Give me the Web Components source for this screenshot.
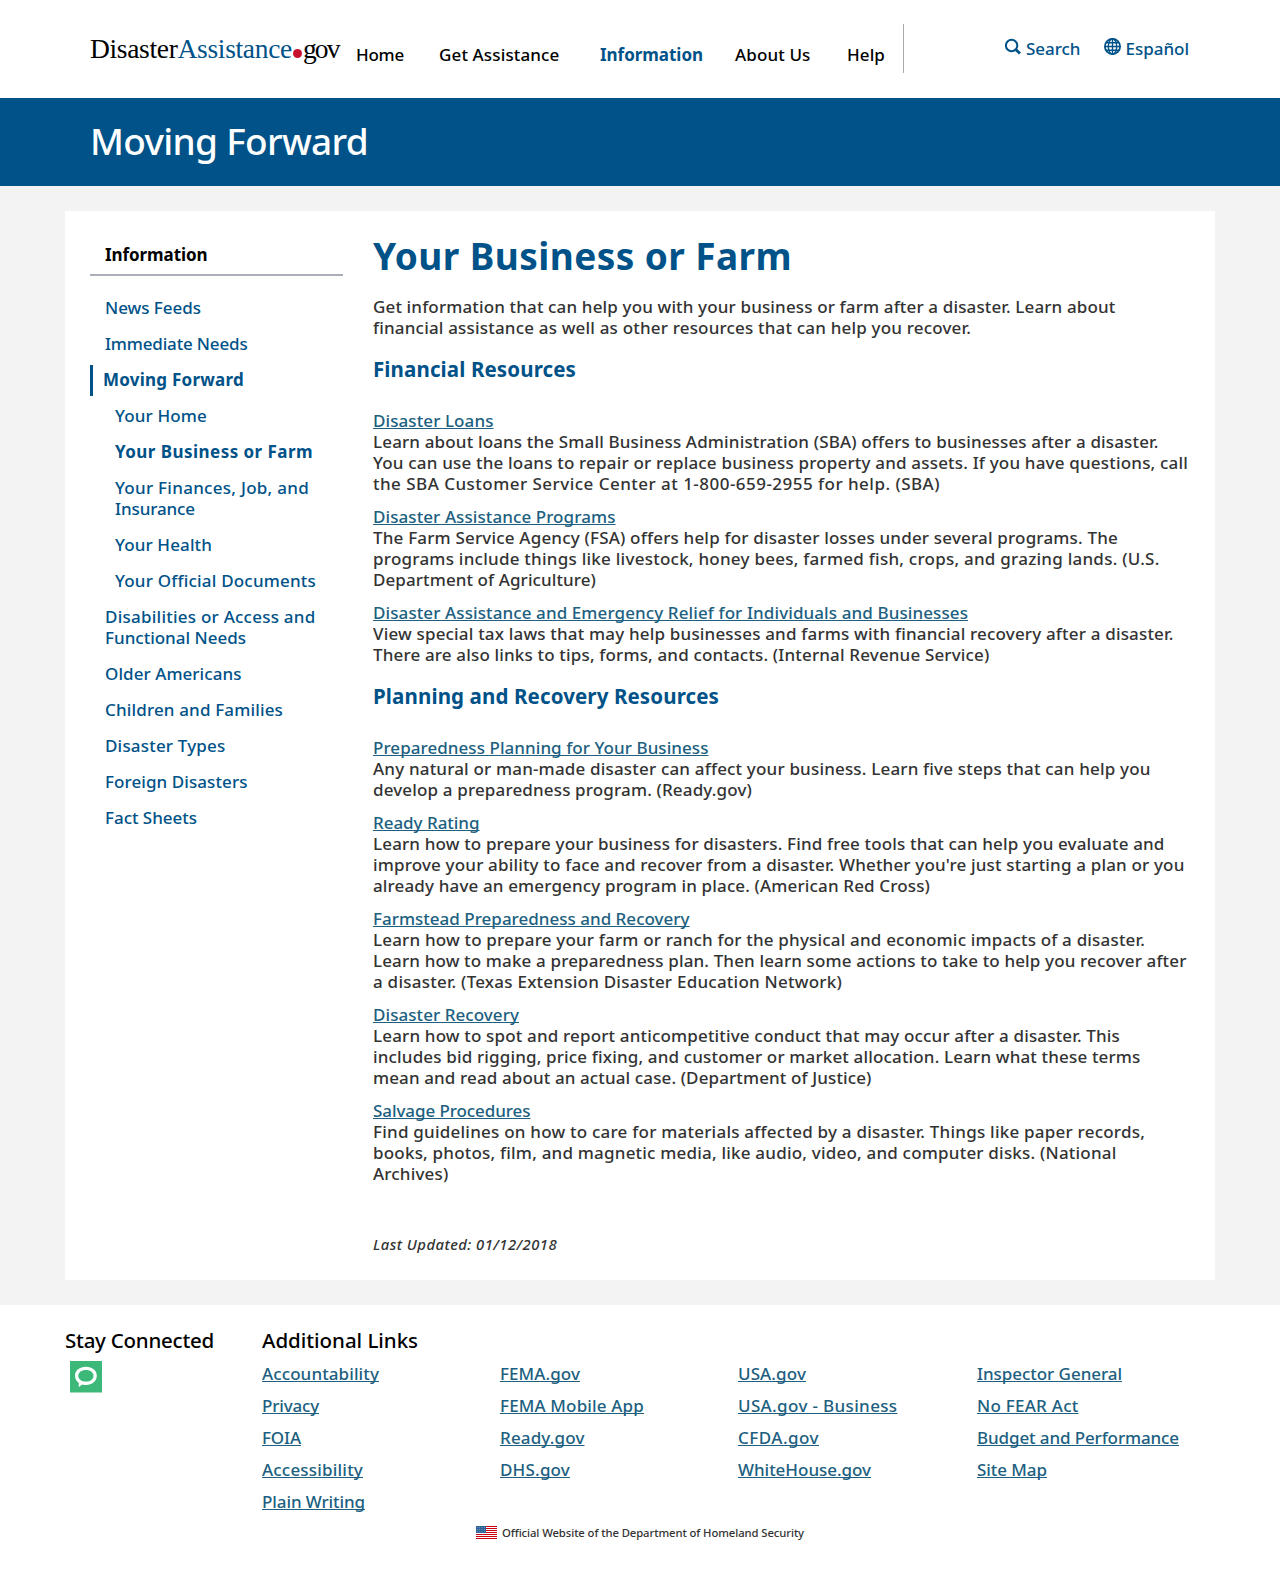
<!DOCTYPE html>
<html lang="en">
<head>
<meta charset="utf-8">
<title>Your Business or Farm | DisasterAssistance.gov</title>
<style>
html,body{margin:0;background:#fff}
body{font:500 17px/21px "Noto Sans","Open Sans",sans-serif;color:#333}
</style>
</head>
<body>
<da-page></da-page>
<script>
const define = (name, css, html, after) => {
  const t = document.createElement('template');
  t.innerHTML = `<style>*{box-sizing:border-box}${css}</style>${html}`;
  customElements.define(name, class extends HTMLElement {
    connectedCallback() {
      if (this.shadowRoot) return;
      this.attachShadow({mode: 'open'}).append(t.content.cloneNode(true));
      if (after) after(this, this.shadowRoot);
    }
  });
};

/* One line of text, tracked so that it fills the measure given in "w". */
define('fit-line', `:host{display:block;white-space:nowrap}
  span{display:inline-block;vertical-align:top;text-decoration:inherit;text-underline-offset:1px;text-decoration-thickness:1px;text-decoration-skip-ink:none}
  :host([link]) span{text-decoration:underline;text-decoration-thickness:1px;color:#205f80}`,
  `<span></span>`, (el, root) => {
    const s = root.querySelector('span');
    s.textContent = el.getAttribute('text');
    const w = parseFloat(el.getAttribute('w'));
    s.style.letterSpacing = (w - s.getBoundingClientRect().width) / s.textContent.length + 'px';
  });
const line = (text, w, extra = '') => `<fit-line text="${text}" w="${w}" ${extra}></fit-line>`;

define('da-logo', `:host{display:flex;width:252px;height:40px;font:400 27.5px/40px "Liberation Serif",serif;color:#000}
  .b{color:#005288} i{width:9px;height:9px;border-radius:50%;background:#c8102e;margin:20px 1px 0 1px}`,
  `${line('Disaster', 87.5)}<div class="b">${line('Assistance', 114.5)}</div><i></i>${line('gov', 35.5)}`);

define('da-header', `:host{display:flex;height:98px;padding-left:90px;background:#fff;color:#000}
  da-logo{margin-top:29px}
  nav{display:flex;margin-top:44px}
  nav fit-line{flex:none}
  .on{font-weight:700;color:#005288}
  hr{width:1px;height:49px;margin:24px 0 0 18px;border:0;background:#aaa}
  .tools{display:flex;margin:38px 0 0 101px;color:#005288}
  svg{flex:none;display:block}`,
  `<da-logo></da-logo>
  <nav>${line('Home', 48, 'style="margin-left:14px"')}${line('Get Assistance', 120.5, 'style="margin-left:35px"')}
  ${line('Information', 103, 'class="on" style="margin-left:40.5px"')}${line('About Us', 75.5, 'style="margin-left:32px"')}${line('Help', 38, 'style="margin-left:36.5px"')}</nav>
  <hr>
  <div class="tools">
   <svg width="16" height="17" viewBox="0 0 16 17" fill="none" stroke="#005288"><circle cx="6.6" cy="7.5" r="5.7" stroke-width="2"/><path d="M10.8 11.6 15 15.600" stroke-width="2.8"/></svg>
   ${line('Search', 54.5, 'style="margin-left:5px"')}
   <svg style="margin-left:23px" width="17" height="17" viewBox="0 0 17 17" fill="none" stroke="#005288" stroke-width="1.4"><circle cx="8.5" cy="8.5" r="7.6" stroke-width="1.800"/><ellipse cx="8.5" cy="8.5" rx="4.2" ry="7.7"/><path d="M8.5 1v15M1 8.500h15M2.2 4.8h12.6M2.2 12.2h12.6"/></svg>
   ${line('Español', 63.5, 'style="margin-left:5px"')}
  </div>`);

define('da-banner', `:host{display:block;height:88px;padding:17px 0 0 90px;background:#005288;color:#fff;font-size:37px;line-height:52px;font-weight:500}`,
  line('Moving Forward', 278));

const items = [
  [['News Feeds', 96]], [['Immediate Needs', 142.5]], 'here',
  'sub', [['Your Home', 92]], 'cur', [['Your Finances, Job, and', 194], ['Insurance', 80]], [['Your Health', 97]], [['Your Official Documents', 201]], 'end',
  [['Disabilities or Access and', 210.5], ['Functional Needs', 141]], [['Older Americans', 136.5]], [['Children and Families', 178]], [['Disaster Types', 120.5]], [['Foreign Disasters', 142.5]], [['Fact Sheets', 92]]
];
define('da-sidebar', `:host{display:block;width:253px;color:#005288}
  h2{margin:0 0 21px;padding:0 0 9px 15px;border-bottom:2px solid #a9aeb9;font:700 17px/21px "Noto Sans",sans-serif;color:#000}
  ul{list-style:none;margin:0;padding:0 0 0 15px;display:flex;flex-direction:column;gap:15px}
  ul ul{padding-left:10px}
  .here{margin:-4px 0 -6px -15px;padding:4px 0 6px 10px;border-left:3px solid #005288;font-weight:700}
  .cur{font-weight:700}`,
  `<h2>${line('Information', 102.5)}</h2><ul>` + items.map(i =>
    i === 'here' ? `<li class="here">${line('Moving Forward', 141)}</li>` :
    i === 'sub' ? '<li><ul>' : i === 'end' ? '</ul></li>' :
    i === 'cur' ? `<li class="cur">${line('Your Business or Farm', 198)}</li>` :
    `<li>${i.map(l => line(...l)).join('')}</li>`).join('') + '</ul>');

const res = (title, ...lines) => `<article>${line(...title, 'link')}${lines.map(l => line(...l)).join('')}</article>`;
define('da-article', `:host{display:block;width:820px}
  h1,h2{margin:0;color:#005288}
  h1{font:700 37px/50px "Noto Sans",sans-serif}
  h2{font:700 20.5px/25px "Noto Sans",sans-serif;margin:19px 0 28px}
  article+article{margin-top:12px}
  .intro{margin-top:15px}
  .date{margin-top:50px;font-size:14.8px;font-style:italic}`,
  `<h1>${line('Your Business or Farm', 419)}</h1>
  <div class="intro">${line('Get information that can help you with your business or farm after a disaster. Learn about', 742.5)}${line('financial assistance as well as other resources that can help you recover.', 598)}</div>
  <h2>${line('Financial Resources', 203)}</h2>
  ${res(['Disaster Loans', 120.5], ['Learn about loans the Small Business Administration (SBA) offers to businesses after a disaster.', 785.5], ['You can use the loans to repair or replace business property and assets. If you have questions, call', 815], ['the SBA Customer Service Center at 1-800-659-2955 for help. (SBA)', 567])}
  ${res(['Disaster Assistance Programs', 242.5], ['The Farm Service Agency (FSA) offers help for disaster losses under several programs. The', 745], ['programs include things like livestock, honey bees, farmed fish, crops, and grazing lands. (U.S.', 786.5], ['Department of Agriculture)', 223])}
  ${res(['Disaster Assistance and Emergency Relief for Individuals and Businesses', 595], ['View special tax laws that may help businesses and farms with financial recovery after a disaster.', 800.5], ['There are also links to tips, forms, and contacts. (Internal Revenue Service)', 616.5])}
  <h2>${line('Planning and Recovery Resources', 346)}</h2>
  ${res(['Preparedness Planning for Your Business', 335.5], ['Any natural or man-made disaster can affect your business. Learn five steps that can help you', 777.5], ['develop a preparedness program. (Ready.gov)', 379])}
  ${res(['Ready Rating', 106.5], ['Learn how to prepare your business for disasters. Find free tools that can help you evaluate and', 791.5], ["improve your ability to face and recover from a disaster. Whether you're just starting a plan or you", 811.5], ['already have an emergency program in place. (American Red Cross)', 557])}
  ${res(['Farmstead Preparedness and Recovery', 316.5], ['Learn how to prepare your farm or ranch for the physical and economic impacts of a disaster.', 772], ['Learn how to make a preparedness plan. Then learn some actions to take to help you recover after', 813.5], ['a disaster. (Texas Extension Disaster Education Network)', 469])}
  ${res(['Disaster Recovery', 146], ['Learn how to spot and report anticompetitive conduct that may occur after a disaster. This', 747], ['includes bid rigging, price fixing, and customer or market allocation. Learn what these terms', 767.5], ['mean and read about an actual case. (Department of Justice)', 498.5])}
  ${res(['Salvage Procedures', 157.5], ['Find guidelines on how to care for materials affected by a disaster. Things like paper records,', 772], ['books, photos, film, and magnetic media, like audio, video, and computer disks. (National', 743.5], ['Archives)', 75.5])}
  <div class="date">${line('Last Updated: 01/12/2018', 184)}</div>`);

const cols = [
  [['Accountability', 117], ['Privacy', 57], ['FOIA', 39], ['Accessibility', 101], ['Plain Writing', 103]],
  [['FEMA.gov', 80], ['FEMA Mobile App', 144], ['Ready.gov', 84.5], ['DHS.gov', 70]],
  [['USA.gov', 68], ['USA.gov - Business', 159.5], ['CFDA.gov', 81], ['WhiteHouse.gov', 133]],
  [['Inspector General', 145], ['No FEAR Act', 101.5], ['Budget and Performance', 202], ['Site Map', 70]]
];
const stripes = Array.from({length: 7}, (_, i) => `<path d="M0 ${i * 2 + .5}h21" stroke="#c8000f"/>`).join('');
const stars = Array.from({length: 12}, (_, i) => `<circle cx="${1.4 + i % 4 * 2.3}" cy="${1.4 + (i >> 2) * 2.1}" r=".45" fill="#a7c3dc"/>`).join('');
define('da-footer', `:host{display:block;background:#fff;padding:22px 65px 0}
  .row{display:flex}
  .stay{width:197px}
  h3{margin:0;font:500 20.5px/26px "Noto Sans",sans-serif;color:#000}
  .stay svg{display:block;margin:8px 0 0 5px}
  .cols{display:flex;margin-top:10px}
  .cols div{width:238px;display:flex;flex-direction:column;gap:11px}
  .cols div:nth-child(3){width:239px}
  .official{display:flex;justify-content:center;margin-top:14px;font-size:11.3px;line-height:14px;gap:5px}`,
  `<div class="row"><section class="stay"><h3>${line('Stay Connected', 149)}</h3>
   <svg width="32" height="32" viewBox="0 0 32 32"><path fill="#3cb878" d="M0 0h32v31.5H0z"/><path fill="#fff" fill-rule="evenodd" d="M16 5.800c6.200 0 10.800 3.700 10.800 9S22.200 24 16 24c-1.500 0-2.600-.1-3.700-.5L8.700 26l.1-4C6.400 20.200 5 17.800 5 14.800 5 9.500 9.700 5.800 16 5.800zm0 3.200c-4.400 0-7.700 2.300-7.700 5.800s3.300 5.800 7.700 5.800 7.500-2.300 7.500-5.800S20.400 9 16 9z"/></svg></section>
  <section><h3>${line('Additional Links', 156)}</h3><div class="cols">${cols.map(c => `<div>${c.map(l => line(...l, 'link')).join('')}</div>`).join('')}</div></section></div>
  <div class="official"><svg width="21" height="13" viewBox="0 0 21 13"><path fill="#fff" d="M0 0h21v13H0z"/>${stripes}<path fill="#2f6499" d="M0 0h10v7H0z"/>${stars}</svg>${line('Official Website of the Department of Homeland Security', 302)}</div>`);

define('da-page', `:host{display:block;width:1280px;height:1580px;overflow:hidden;background:#fff}
  main{background:#f3f3f3;height:1119px;padding:25px 65px}
  .card{background:#fff;height:1069px;display:flex;gap:30px;padding:0 0 0 25px}
  da-sidebar{padding-top:33px} da-article{padding-top:20px}`,
  `<da-header></da-header><da-banner></da-banner><main><div class="card"><da-sidebar></da-sidebar><da-article></da-article></div></main><da-footer></da-footer>`);
</script>
</body>
</html>
